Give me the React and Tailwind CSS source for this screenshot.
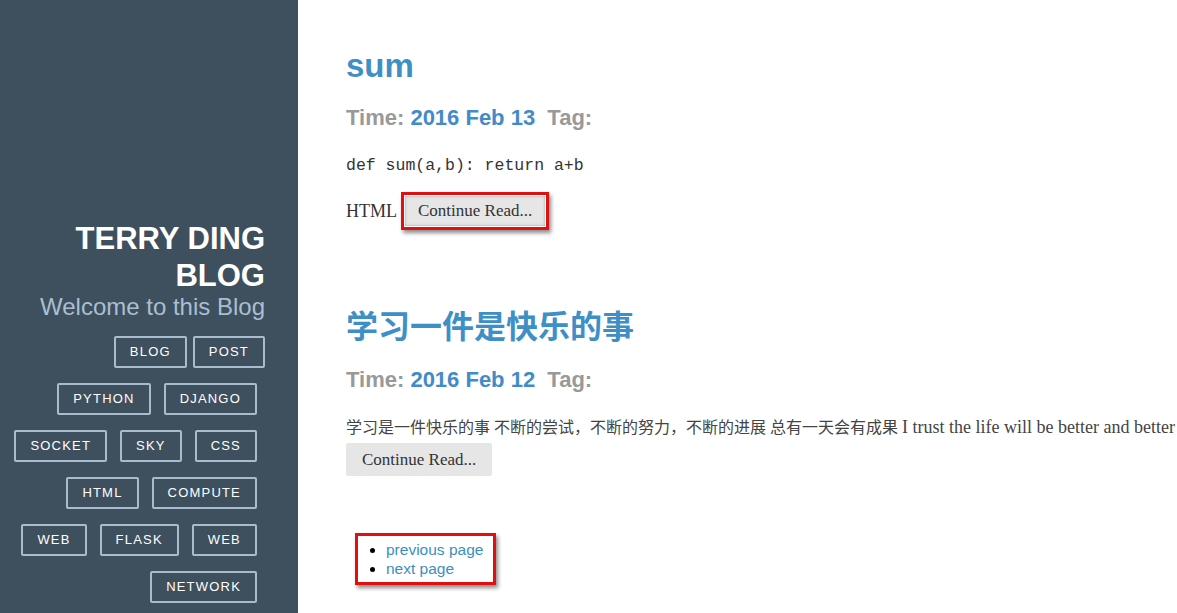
import React from "react";

const tagsRows = [
  ["PYTHON", "DJANGO"],
  ["SOCKET", "SKY", "CSS"],
  ["HTML", "COMPUTE"],
  ["WEB", "FLASK", "WEB"],
  ["NETWORK"],
];

function Tag({ children }) {
  return (
    <a className="inline-flex h-[32px] items-center justify-center rounded-[2px] border-2 border-[#a7bccd] px-[14px] text-[13px] tracking-[1.2px] text-white">
      {children}
    </a>
  );
}

function Meta({ date, mt }) {
  return (
    <div className={`${mt} text-[22px] font-bold leading-[28px] text-[#999999]`} style={{ fontFamily: '"Liberation Sans", Arial, sans-serif' }}>
      Time: <span className="text-[#428bca]">{date}</span>&nbsp; Tag:
    </div>
  );
}

export default function App() {
  return (
    <div className="flex h-[613px] w-[1177px] overflow-hidden bg-white" style={{ fontFamily: '"Liberation Sans", Arial, sans-serif' }}>
      <aside className="flex w-[298px] shrink-0 flex-col bg-[#3e4f5e] pr-[33px] pt-[220px] text-right">
        <h1 className="text-[31px] font-bold leading-[37px] text-white">
          TERRY DING
          <br />
          BLOG
        </h1>
        <p className="mt-[-2px] text-[24px] leading-[30px] text-[#a9bfd1]">Welcome to this Blog</p>
        <div className="mt-[14px] flex justify-end gap-[6px]">
          <Tag>BLOG</Tag>
          <Tag>POST</Tag>
        </div>
        <div className="mr-[8px] mt-[15px] flex flex-col items-end gap-[15px]">
          {tagsRows.map((row, i) => (
            <div key={i} className="flex justify-end gap-[13px]">
              {row.map((t, j) => (
                <Tag key={j}>{t}</Tag>
              ))}
            </div>
          ))}
        </div>
      </aside>
      <main className="flex-1 pl-[48px] pt-[46px]">
        <h2 className="text-[33px] font-bold leading-[40px] text-[#3f8fc7]">sum</h2>
        <Meta date="2016 Feb 13" mt="mt-[18px]" />
        <p className="mt-[24px] text-[16.5px] leading-[20px] text-[#333]" style={{ fontFamily: '"Liberation Mono", "Courier New", monospace' }}>
          def sum(a,b): return a+b
        </p>
        <div className="mt-[16px] flex items-center text-[18px] text-[#333]" style={{ fontFamily: '"Liberation Serif", serif' }}>
          <span>HTML</span>
          <span className="ml-[4px] inline-flex border-[3px] border-[#e01010] p-[1px] shadow-[2px_3px_4px_rgba(0,0,0,0.45)]">
            <button className="h-[30px] bg-[#e6e6e6] px-[13px] text-[17px] text-[#333] shadow-[inset_0_0_3px_rgba(0,0,0,0.3)]">
              Continue Read...
            </button>
          </span>
        </div>

        <h2 className="mt-[77px] text-[32px] font-bold leading-[40px] text-[#3f8fc7]" style={{ fontFamily: '"Liberation Sans", "Noto Sans CJK SC", sans-serif' }}>
          学习一件是快乐的事
        </h2>
        <Meta date="2016 Feb 12" mt="mt-[19px]" />
        <p className="mt-[22px] whitespace-nowrap text-[16px] leading-[22px] text-[#444]" style={{ fontFamily: '"Liberation Serif", "Noto Sans CJK SC", serif' }}>
          学习是一件快乐的事 不断的尝试，不断的努力，不断的进展 总有一天会有成果 <span className="text-[18px]">I trust the life will be better and better</span>
        </p>
        <div className="mt-[4px]">
          <button className="h-[33px] rounded-[2px] bg-[#e6e6e6] px-[16px] text-[17px] text-[#333]" style={{ fontFamily: '"Liberation Serif", serif' }}>
            Continue Read...
          </button>
        </div>

        <div className="ml-[9px] mt-[57px] inline-block border-[3px] border-[#e01010] py-[4px] pl-[14px] pr-[10px] shadow-[2px_3px_4px_rgba(0,0,0,0.45)]">
          <ul className="list-disc pl-[14px] text-[15.5px] leading-[19px] text-[#3a8fc1] marker:text-black">
            <li>previous page</li>
            <li>next page</li>
          </ul>
        </div>
      </main>
    </div>
  );
}
